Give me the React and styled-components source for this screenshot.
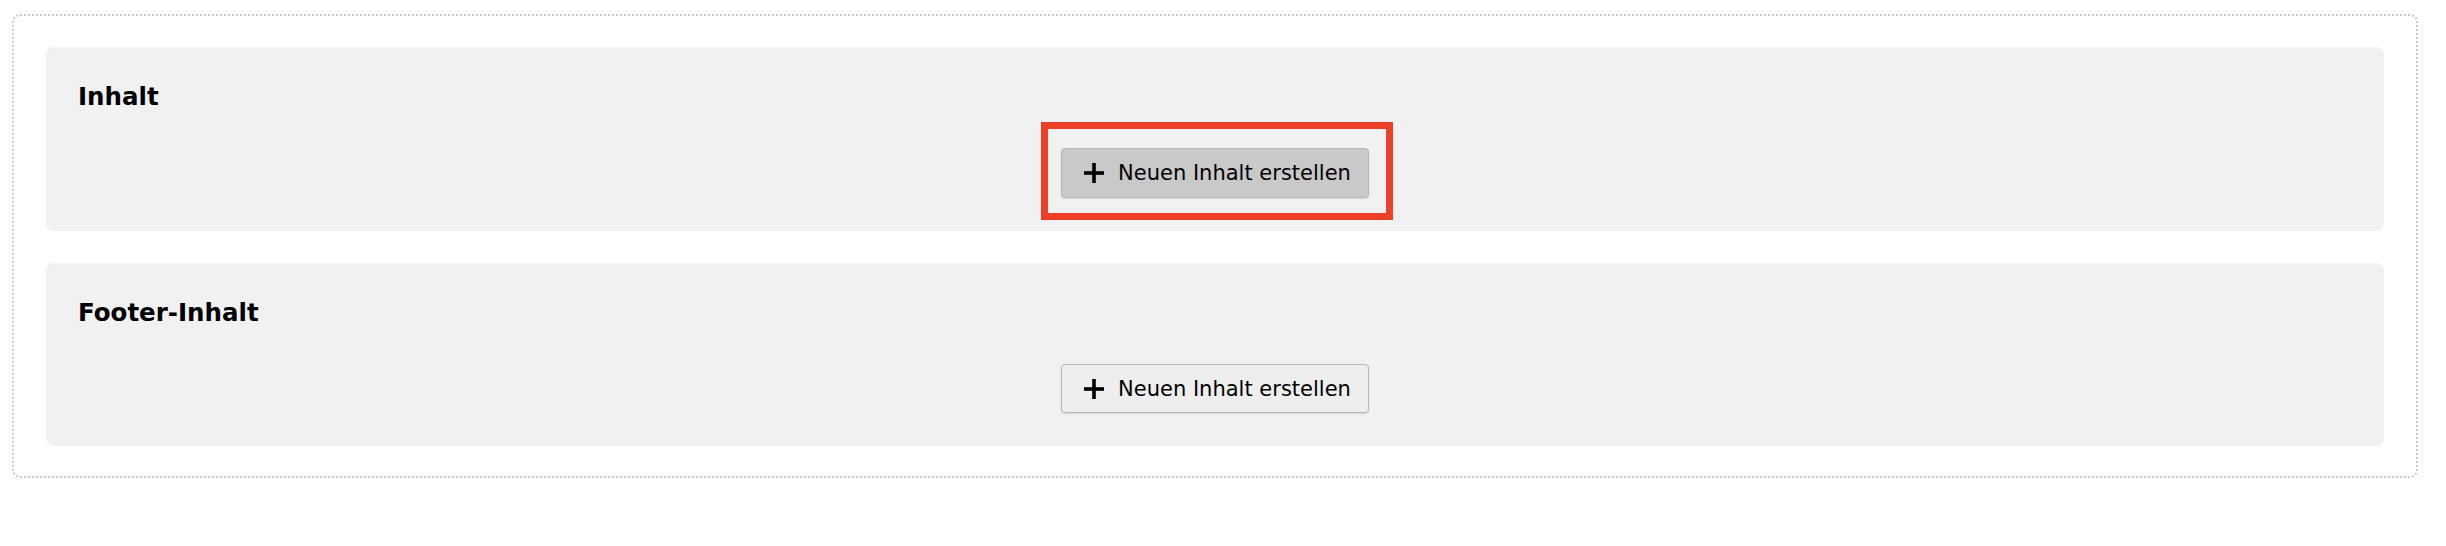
import React from "react";
import styled, { createGlobalStyle } from "styled-components";

const Global = createGlobalStyle`
  html, body { margin: 0; padding: 0; background: #ffffff; }
  body { font-family: "DejaVu Sans", Verdana, sans-serif; color: #000; }
`;

const Frame = styled.div`
  margin: 14px 28px 0 12px;
  border: 2px dotted #cacaca;
  border-radius: 8px;
  padding: 31px 32px 30px 32px;
  display: flex;
  flex-direction: column;
  gap: 32px;
`;

const Panel = styled.section`
  background: #f1f1f1;
  border-radius: 8px;
  padding: 36px 32px 33px;
  display: flex;
  flex-direction: column;
`;

const Heading = styled.h2`
  margin: 0 0 37px;
  font-family: "DejaVu Sans", Verdana, sans-serif;
  font-weight: bold;
  font-size: 24.5px;
  line-height: 28px;
  color: #000;
`;

const Actions = styled.div`
  display: flex;
  justify-content: center;
`;

const Highlight = styled.div`
  position: relative;
  display: inline-flex;
  &::after {
    content: "";
    position: absolute;
    top: -26px;
    left: -20px;
    right: -24px;
    bottom: -22px;
    border: 7px solid #ec4127;
    pointer-events: none;
  }
`;

const Button = styled.button`
  box-sizing: border-box;
  height: ${(p) => (p.$active ? "50px" : "49px")};
  display: inline-flex;
  align-items: center;
  gap: 14px;
  padding: 0 17px 0 22px;
  font-family: "DejaVu Sans", Verdana, sans-serif;
  font-size: 21px;
  color: #000;
  background: ${(p) => (p.$active ? "#c9c9c9" : "#eeeeee")};
  border: 1px solid ${(p) => (p.$active ? "#b5b5b5" : "#b8b8b8")};
  border-radius: 4px;
  box-shadow: 0 1px 2px rgba(0, 0, 0, 0.12);
  cursor: pointer;
`;

const PlusIcon = () => (
  <svg width="20" height="20" viewBox="0 0 20 20" aria-hidden="true">
    <rect x="8.2" y="0" width="3.6" height="20" fill="#000" />
    <rect x="0" y="8.2" width="20" height="3.6" fill="#000" />
  </svg>
);

const CreateButton = ({ active }) => (
  <Button $active={active}>
    <PlusIcon />
    <span>Neuen Inhalt erstellen</span>
  </Button>
);

export default function App() {
  return (
    <>
      <Global />
      <Frame>
        <Panel>
          <Heading>Inhalt</Heading>
          <Actions>
            <Highlight>
              <CreateButton active />
            </Highlight>
          </Actions>
        </Panel>
        <Panel>
          <Heading>Footer-Inhalt</Heading>
          <Actions>
            <CreateButton />
          </Actions>
        </Panel>
      </Frame>
    </>
  );
}
